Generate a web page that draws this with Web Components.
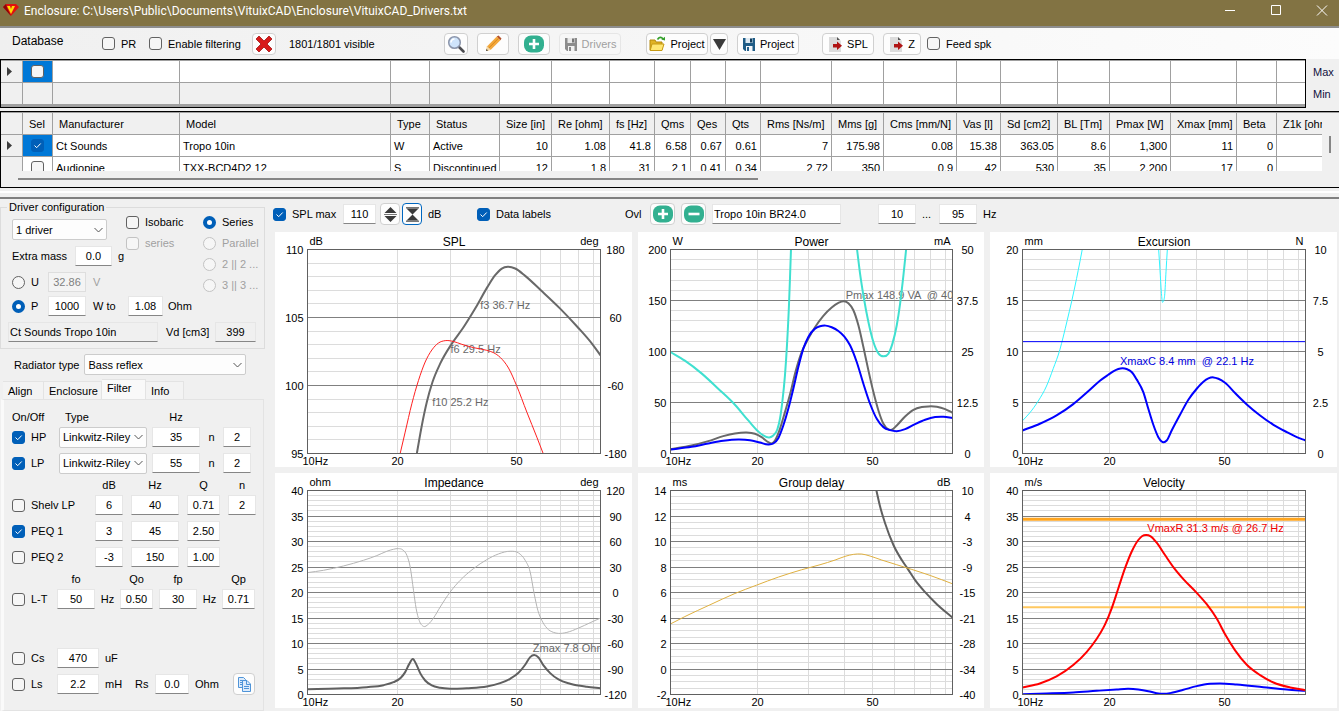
<!DOCTYPE html>
<html lang="en">
<head>
<meta charset="utf-8">
<title>Enclosure</title>
<style>
  html, body {
    margin: 0;
    height: 100%;
  }

  body {
    background: #f0f0f0;
    color: #000;
    font: 11px/14px "Liberation Sans", Arial, sans-serif;
    overflow: hidden;
  }
</style>
</head>
<body>
<enclosure-app></enclosure-app>

<script>
const ICONS = {
  logo: '<svg width="16" height="14" viewBox="0 0 16 14"><path d="M3 1h10l3 3-8 9L0 4z" fill="#e01010"/><path d="M0 4l3-3 1 4 4 8z" fill="#8c0606"/><path d="M4 3l3 0 1 3 1-3 3 0-2 4-2 4-2-4z" fill="#ffd800"/></svg>',
  cross: '<svg width="18" height="18" viewBox="0 0 18 18"><path d="M4 1l5 5 5-5 3 3-5 5 5 5-3 3-5-5-5 5-3-3 5-5-5-5z" fill="#d81b1b" stroke="#a51212" stroke-width=".8"/></svg>',
  search: '<svg width="18" height="18" viewBox="0 0 18 18"><path d="M11.5 11.5l5 5" stroke="#4c4c50" stroke-width="2.6" stroke-linecap="round"/><circle cx="7.5" cy="7.5" r="5.8" fill="#cfe4fb" stroke="#8b95ab" stroke-width="1.5"/><path d="M4 7.500a3.500 3.500 0 0 1 3.500-3.500" fill="none" stroke="#fff" stroke-width="1.600"/></svg>',
  pencil: '<svg width="18" height="18" viewBox="0 0 18 18"><path d="M2 16l1.200-4.800L12.800 1.600l3.600 3.600-9.600 9.600z" fill="#f3a83c"/><path d="M12.800 1.600L14.500.4l3 3-1.100 1.800z" fill="#b5502a"/><path d="M3.200 11.200l3.600 3.600L2 16z" fill="#f2d7a8"/><path d="M2 16l.6-2 1.400 1.400z" fill="#333"/><path d="M4.800 13l9.800-9.800" stroke="#d98717"/></svg>',
  plus: '<svg width="20" height="18" viewBox="0 0 20 18"><rect width="20" height="17" y=".5" rx="7" fill="#32b090"/><path d="M10 4v10M5 9h10" stroke="#fff" stroke-width="2.600"/></svg>',
  minus: '<svg width="20" height="18" viewBox="0 0 20 18"><rect width="20" height="17" y=".5" rx="7" fill="#32b090"/><path d="M4.500 9h11" stroke="#fff" stroke-width="2.600"/></svg>',
  save: '<svg width="14" height="14" viewBox="0 0 14 14"><path d="M1 1h12v13H3l-2-2z" fill="#1f5c86"/><path d="M3.500 1h7v5h-7z" fill="#dfeaf2"/><path d="M8 1.500h2v4H8z" fill="#123c5b"/><path d="M4 9h6.500v5H4z" fill="#f4f7fa"/><path d="M5 10h2v4H5z" fill="#26618b"/></svg>',
  saveOff: '<svg width="14" height="14" viewBox="0 0 14 14"><path d="M1 1h12v13H3l-2-2z" fill="#8c8c8c"/><path d="M3.500 1h7v5h-7z" fill="#e8e8e8"/><path d="M8 1.500h2v4H8z" fill="#777"/><path d="M4 9h6.500v5H4z" fill="#f1f1f1"/><path d="M5 10h2v4H5z" fill="#888"/></svg>',
  open: '<svg width="17" height="16" viewBox="0 0 17 16"><path d="M1 4h5l1 2h6v8H1z" fill="#e0b324" stroke="#b58a0e"/><path d="M3 8h12l-2 6.500H1.200z" fill="#ffe772" stroke="#c79a14"/><path d="M8.500 3.500C10 .8 12.500.8 14 3" fill="none" stroke="#35a02c" stroke-width="1.600"/><path d="M12.300 3.600l3.700.9V.8z" fill="#35a02c"/></svg>',
  down: '<svg width="13" height="12" viewBox="0 0 13 12"><path d="M0 1h13L6.500 12z" fill="#3a3a3a"/></svg>',
  exportDoc: '<svg width="15" height="16" viewBox="0 0 15 16"><path d="M1 1h8l4 4v11H1z" fill="#dcdcdc"/><path d="M9 1l3 3H9z" fill="#555"/><path d="M5 8h4V5.500l5 4.200-5 4.300v-2.500H5z" fill="#b01414"/></svg>',
  spread: '<svg width="13" height="15" viewBox="0 0 13 15"><path d="M6.500 0L12.500 6H.5zM6.500 15L.5 9h12z" fill="#3a3a3a"/><path d="M0 7.500h13" stroke="#777"/></svg>',
  squeeze: '<svg width="13" height="15" viewBox="0 0 13 15"><path d="M.5 1.500h12l-6 6zM.5 13.500h12l-6-6z" fill="#3a3a3a"/><path d="M0 .8h13M0 14.200h13" stroke="#3a3a3a"/></svg>',
  copy: '<svg width="15" height="15" viewBox="0 0 15 15" fill="#dcebfb" stroke="#4f94d8"><path d="M1.500.5h5l2 2v8h-7z"/><path d="M3 3.500h3M3 5.500h2M3 7.500h2"/><path d="M5.500 3.500h4.500l3.500 3.500v7.500h-8z"/><path d="M9.500 3.500v4h4M7 9.500h5M7 11.500h5" fill="none"/></svg>'
};

const CONTROL_CSS = `
  input, select, button {
    box-sizing: border-box;
    margin: 0;
    font: inherit;
    color: inherit;
  }
`;

class TitleBar extends HTMLElement {
  constructor() {
    super();
    this.attachShadow({ mode: 'open' }).innerHTML = `
      <style>
        :host {
          display: flex;
          align-items: center;
          height: 26px;
          padding: 0 11px 0 3px;
          box-sizing: border-box;
          background: #827343;
          color: #fff;
          font: 12px/20px Roboto, sans-serif;
        }
        svg { display: block; }
        h1 { flex: 1; margin: 0 0 4px 5px; font: inherit; white-space: nowrap; overflow: hidden; }
        .logo { margin-bottom: 6px; }
        .buttons { display: flex; gap: 34px; margin-bottom: 6px; }
        button { padding: 0; border: 0; background: none; color: inherit; }
      </style>
      <span class="logo">${ICONS.logo}</span>
      <h1><slot></slot></h1>
      <div class="buttons">
        <button aria-label="Minimize"><svg width="12" height="11"><path d="M1 5.500h10" stroke="#fff"/></svg></button>
        <button aria-label="Maximize"><svg width="12" height="11"><path d="M1.500.5h9v9h-9z" fill="none" stroke="#fff"/></svg></button>
        <button aria-label="Close"><svg width="12" height="11"><path d="M1 .5l10 10M11 .5l-10 10" stroke="#fff"/></svg></button>
      </div>
    `;
  }
}

class ToolButton extends HTMLElement {
  connectedCallback() {
    if (this.shadowRoot) return;
    this.attachShadow({ mode: 'open' }).innerHTML = `
      <style>
        ${CONTROL_CSS}
        :host { display: inline-block; flex: none; }
        button {
          display: flex;
          align-items: center;
          justify-content: center;
          gap: 4px;
          width: 100%;
          height: 22px;
          padding: 0;
          border: 1px solid #d0d0d0;
          border-radius: 4px;
          background: #fdfdfd;
        }
        button:disabled { color: #a0a0a0; background: #f7f7f7; border-color: #e6e6e6; }
        :host([focused]) button { border-color: #0067c0; }
        svg { display: block; flex: none; }
      </style>
      <button ${this.hasAttribute('disabled') ? 'disabled' : ''}
        ${this.hasAttribute('label') ? `aria-label="${this.getAttribute('label')}"` : ''}>
        ${ICONS[this.getAttribute('icon')]}<slot></slot>
      </button>
    `;
  }
}

class TickBox extends HTMLElement {
  connectedCallback() {
    if (this.shadowRoot) return;
    const type = this.getAttribute('type') || 'checkbox';
    const flags = ['checked', 'disabled'].filter((f) => this.hasAttribute(f)).join(' ');
    const name = this.getAttribute('label');
    this.attachShadow({ mode: 'open' }).innerHTML = `
      <style>
        ${CONTROL_CSS}
        :host { display: inline-block; flex: none; }
        label { display: flex; align-items: center; gap: 6px; white-space: nowrap; }
        .mark { display: grid; width: 13px; height: 13px; }
        .mark > * { grid-area: 1 / 1; }
        svg { display: none; pointer-events: none; }
        input {
          appearance: none;
          width: 13px;
          height: 13px;
          border: 1px solid #626262;
          border-radius: 3px;
          background: #f6f6f6;
        }
        input[type=radio] { border-radius: 50%; }
        input:checked { background: #005fb8; border-color: #005fb8; }
        input[type=radio]:checked { background: #fff; border-width: 4px; }
        input[type=checkbox]:checked + svg { display: block; }
        input:disabled { border-color: #c3c3c3; }
        :host([disabled]) label { color: #a0a0a0; }
      </style>
      <label>
        <span class="mark">
          <input type="${type}" ${flags} ${name ? `aria-label="${name}"` : ''}>
          <svg width="13" height="13"><path d="M3.500 6.500l2.200 2.200 4-4.200" fill="none" stroke="#fff"/></svg>
        </span>
        <slot></slot>
      </label>
    `;
  }
}

class ValueBox extends HTMLElement {
  connectedCallback() {
    if (this.shadowRoot) return;
    const flags = ['disabled', 'readonly'].filter((f) => this.hasAttribute(f)).join(' ');
    this.attachShadow({ mode: 'open' }).innerHTML = `
      <style>
        ${CONTROL_CSS}
        :host { display: block; flex: none; min-width: 0; }
        input {
          display: block;
          width: 100%;
          height: 20px;
          padding: 0 1px;
          border: 1px solid #e6e6e6;
          border-bottom-color: #868686;
          background: #fff;
          text-align: center;
        }
        :host([left]) input { text-align: left; }
        input:read-only { background: #f0f0f0; }
        input:disabled { background: #f4f4f4; color: #808080; border-color: #dedede; }
      </style>
      <input type="text" value="${this.getAttribute('value')}" aria-label="${this.getAttribute('label')}" ${flags}>
    `;
  }
}

class PickList extends HTMLElement {
  connectedCallback() {
    if (this.shadowRoot) return;
    this.attachShadow({ mode: 'open' }).innerHTML = `
      <style>
        ${CONTROL_CSS}
        :host { display: grid; align-items: center; }
        select, svg { grid-area: 1 / 1; }
        select {
          appearance: none;
          width: 100%;
          height: 21px;
          padding: 0 14px 0 3px;
          border: 1px solid #cccccc;
          border-radius: 2px;
          background: #fdfdfd;
        }
        svg { justify-self: end; margin-right: 3px; pointer-events: none; }
      </style>
      <select aria-label="${this.getAttribute('label')}"><option>${this.getAttribute('value')}</option></select>
      <svg width="11" height="8"><path d="M1.500 2l4 4 4-4" fill="none" stroke="#555"/></svg>
    `;
  }
}

class DatabaseBar extends HTMLElement {
  constructor() {
    super();
    this.attachShadow({ mode: 'open' }).innerHTML = `
      <style>
        :host {
          display: flex;
          align-items: center;
          gap: 9px;
          height: 33px;
          padding-left: 12px;
          border-top: 2px solid #8e8e8e;
          box-sizing: border-box;
          background: linear-gradient(90deg, #f0f0f0, #fcfcfc);
          white-space: nowrap;
        }
        .title { width: 81px; font-size: 12px; padding-bottom: 6px; }
        .state { width: 146px; margin-left: 4px; }
        .pr { width: 38px; }
        .filtering { width: 94px; }
        .small { width: 24px; }
        .icon { width: 32px; }
        .text { width: 62px; }
        .pair { display: flex; gap: 2px; margin-left: 16px; }
        .arrow { width: 18px; }
        .spl { width: 52px; margin-left: 14px; }
        .z { width: 38px; }
        .feed { margin-left: -3px; }
      </style>
      <span class="title">Database</span>
      <tick-box class="pr">PR</tick-box>
      <tick-box class="filtering">Enable filtering</tick-box>
      <tool-button class="small" icon="cross" label="Clear filter"></tool-button>
      <span class="state">1801/1801 visible</span>
      <tool-button class="small" icon="search" label="Search"></tool-button>
      <tool-button class="icon" icon="pencil" label="Edit"></tool-button>
      <tool-button class="icon" icon="plus" label="Add"></tool-button>
      <tool-button class="text" icon="saveOff" disabled>Drivers</tool-button>
      <div class="pair">
        <tool-button class="text" icon="open">Project</tool-button>
        <tool-button class="arrow" icon="down" label="Recent projects"></tool-button>
      </div>
      <tool-button class="text" icon="save">Project</tool-button>
      <tool-button class="spl" icon="exportDoc">SPL</tool-button>
      <tool-button class="z" icon="exportDoc">Z</tool-button>
      <tick-box class="feed">Feed spk</tick-box>
    `;
  }
}

const COLUMNS = [
  ['', 22], ['Sel', 30], ['Manufacturer', 127], ['Model', 211], ['Type', 39], ['Status', 70],
  ['Size [in]', 52], ['Re [ohm]', 58], ['fs [Hz]', 45], ['Qms', 36], ['Qes', 35], ['Qts', 35],
  ['Rms [Ns/m]', 71], ['Mms [g]', 52], ['Cms [mm/N]', 73], ['Vas [l]', 44], ['Sd [cm2]', 57],
  ['BL [Tm]', 52], ['Pmax [W]', 61], ['Xmax [mm]', 66], ['Beta', 40], ['Z1k [ohm]', 0]
];

const DRIVERS = [
  ['Ct Sounds', 'Tropo 10in', 'W', 'Active', '10', '1.08', '41.8', '6.58', '0.67', '0.61', '7', '175.98', '0.08', '15.38', '363.05', '8.6', '1,300', '11', '0', ''],
  ['Audiopipe', 'TXX-BCD4D2 12', 'S', 'Discontinued', '12', '1.8', '31', '2.1', '0.41', '0.34', '2.72', '350', '0.9', '42', '530', '35', '2,200', '17', '0', '']
];

const GRID_CSS = `
  table {
    width: 100%;
    border-collapse: separate;
    border-spacing: 0;
    table-layout: fixed;
  }
  th, td {
    height: 22px;
    padding: 0 3px;
    box-sizing: border-box;
    border-right: 1px solid #a0a0a0;
    border-bottom: 1px solid #a0a0a0;
    font-weight: normal;
    text-align: left;
    white-space: nowrap;
    overflow: hidden;
    background: #fff;
  }
  th { background: #f0f0f0; }
  thead th { padding-left: 6px; padding-right: 0; }
  tbody th { padding-left: 6px; }
  th svg { display: block; }
  td.sel { padding: 0 8px; }
  td.sel tick-box { display: block; }
  td.current { background: #0078d7; }
  tr > :last-child { border-right: 0; }
`;
const COLGROUP = `<colgroup>${COLUMNS.map(([, w]) => (w ? `<col style="width:${w}px">` : '<col>')).join('')}</colgroup>`;
const ROW_MARK = '<svg width="6" height="9"><path d="M0 0l5 4.500-5 4.500z" fill="#3c3c3c"/></svg>';

class FilterGrid extends HTMLElement {
  constructor() {
    super();
    const blank = COLUMNS.slice(2);
    this.attachShadow({ mode: 'open' }).innerHTML = `
      <style>
        ${GRID_CSS}
        :host { display: flex; }
        .frame { flex: 1; min-width: 0; border: 1px solid #000; background: #a0a0a0; padding: 1px 0 2px; }
        .limits { width: 26px; padding: 2px 0 0 7px; line-height: 22px; color: #101040; }
        .off { background: #f0f0f0; }
      </style>
      <div class="frame">
        <table aria-label="Filter limits">
          ${COLGROUP}
          <tr><th>${ROW_MARK}</th><td class="sel current"><tick-box label="Filter selected"></tick-box></td>${blank.map(() => '<td></td>').join('')}</tr>
          <tr><th></th><td class="off"></td>${blank.map((c, i) => `<td${i < 4 ? ' class="off"' : ''}></td>`).join('')}</tr>
        </table>
      </div>
      <div class="limits">Max<br>Min</div>
    `;
  }
}

class DriverGrid extends HTMLElement {
  constructor() {
    super();
    const rows = DRIVERS.map((cells, i) => `
      <tr>
        <th>${i ? '' : ROW_MARK}</th>
        <td class="sel${i ? '' : ' current'}"><tick-box ${i ? '' : 'checked'} label="Select ${cells[0]}"></tick-box></td>
        ${cells.map((c, n) => `<td${n > 3 ? ' class="num"' : ''}>${c}</td>`).join('')}
      </tr>`).join('');
    this.attachShadow({ mode: 'open' }).innerHTML = `
      <style>
        ${GRID_CSS}
        :host { display: block; border: 1px solid #000; border-right: 0; margin-top: 3px; }
        .view { display: grid; grid-template-columns: 1fr 17px; border-top: 1px solid #a0a0a0; }
        .rows { height: 58px; overflow: hidden; }
        .num { text-align: right; }
        .vbar { padding: 23px 0 0 7px; }
        .vbar::before { content: ""; display: block; width: 2px; height: 17px; background: #868686; }
        .hbar { height: 16px; padding: 7px 0 0 17px; box-sizing: border-box; }
        .hbar::before { content: ""; display: block; width: 56%; height: 2px; background: #868686; }
      </style>
      <div class="view">
        <div class="rows">
          <table>
            ${COLGROUP}
            <thead><tr>${COLUMNS.map(([name]) => `<th>${name}</th>`).join('')}</tr></thead>
            <tbody>${rows}</tbody>
          </table>
        </div>
        <div class="vbar"></div>
      </div>
      <div class="hbar"></div>
    `;
  }
}

class DriverConfig extends HTMLElement {
  constructor() {
    super();
    this.attachShadow({ mode: 'open' }).innerHTML = `
      <style>
        :host { display: block; }
        fieldset {
          margin: 0 4px 0 0;
          padding: 0 8px 4px 11px;
          border: 1px solid #dcdcdc;
          min-width: 0;
        }
        legend { margin-left: -5px; padding: 0 2px; }
        .top, .upper, .row { display: flex; align-items: center; }
        .top, .upper { align-items: flex-start; }
        .main { width: 191px; flex: none; }
        .combo { width: 114px; padding-top: 5px; }
        .combo pick-list { width: 95px; }
        .checks { display: grid; gap: 7px; padding-top: 1px; }
        .radios { display: grid; gap: 7px; padding-top: 1px; }
        .row { height: 24px; }
        .mass { margin: 4px 0 2px; }
        .mass value-box { width: 37px; margin: 0 6px 0 auto; }
        .mass span:last-child { width: 8px; }
        tick-box.mode { width: 36px; }
        .level { width: 38px; }
        .unit { width: 42px; padding-left: 7px; box-sizing: border-box; }
        .re { width: 35px; margin-right: 5px; }
        .off { color: #a0a0a0; }
        .name { margin: 2px 0 0 -4px; }
        .name value-box { width: 150px; }
        .name span { flex: 1; padding-left: 8px; }
        .name .vd { width: 41px; }
      </style>
      <fieldset>
        <legend>Driver configuration</legend>
        <div class="top">
          <div class="main">
            <div class="upper">
              <div class="combo">
                <pick-list label="Driver count" value="1 driver"></pick-list>
                <div class="row mass"><span>Extra mass</span><value-box label="Extra mass" value="0.0"></value-box><span>g</span></div>
              </div>
              <div class="checks">
                <tick-box>Isobaric</tick-box>
                <tick-box disabled>series</tick-box>
              </div>
            </div>
            <div class="row"><tick-box type="radio" class="mode">U</tick-box><value-box class="level" label="Voltage" value="32.86" disabled></value-box><span class="unit off">V</span></div>
            <div class="row"><tick-box type="radio" class="mode" checked>P</tick-box><value-box class="level" label="Power" value="1000"></value-box><span class="unit">W to</span><value-box class="re" label="Load" value="1.08"></value-box><span>Ohm</span></div>
          </div>
          <div class="radios">
            <tick-box type="radio" checked>Series</tick-box>
            <tick-box type="radio" disabled>Parallel</tick-box>
            <tick-box type="radio" disabled>2 || 2 ...</tick-box>
            <tick-box type="radio" disabled>3 || 3 ...</tick-box>
          </div>
        </div>
        <div class="row name"><value-box left readonly label="Driver" value="Ct Sounds Tropo 10in"></value-box><span>Vd [cm3]</span><value-box class="vd" readonly label="Vd" value="399"></value-box></div>
      </fieldset>
    `;
  }
}

class FilterPanel extends HTMLElement {
  constructor() {
    super();
    const box = (label, value) => `<value-box label="${label}" value="${value}"></value-box>`;
    this.attachShadow({ mode: 'open' }).innerHTML = `
      <style>
        :host { display: flex; flex-direction: column; flex: 1; }
        .radiator { display: flex; align-items: center; gap: 5px; height: 31px; padding: 0 23px 0 14px; }
        .radiator pick-list { flex: 1; }
        .tabs { display: flex; align-items: flex-end; margin: -1px 0 -1px 3px; height: 21px; }
        .tabs button {
          height: 19px;
          padding: 0 5px;
          border: 1px solid #e3e3e3;
          border-left: 0;
          background: #f3f3f3;
          font: inherit;
          text-align: left;
          color: inherit;
        }
        .tabs .on { height: 21px; padding: 0 5px 4px; background: #f9f9f9; border-bottom-color: #f9f9f9; }
        .page { flex: 1; margin: 0 5px 0 1px; padding: 8px 0 0 8px; border: 1px solid #e3e3e3; border-left: 3px solid #fafafa; }
        .line { display: grid; align-items: center; height: 26px; }
        .head { height: 14px; margin-top: 2px; }
        .line > span { text-align: center; }
        .line > .lead { text-align: left; }
        .line > .after { text-align: left; padding-left: 6px; }
        .pass { grid-template-columns: 47px 93px 48px 23px 28px; }
        .pass pick-list { width: 88px; }
        .eq { grid-template-columns: 75px 28px 48px 33px 28px; column-gap: 8px; }
        .lt { grid-template-columns: 45px 38px 25px 33px 44px 25px 33px; }
        .lt > .wide { padding-left: 6px; }
        .part { grid-template-columns: 45px 42px 36px 20px 34px 44px 22px; }
        .gap { height: 33px; }
      </style>
      <div class="radiator"><span>Radiator type</span><pick-list label="Radiator type" value="Bass reflex"></pick-list></div>
      <div class="tabs" role="tablist">
        <button role="tab" style="width:41px">Align</button>
        <button role="tab" style="width:58px">Enclosure</button>
        <button role="tab" style="width:44px" class="on" aria-selected="true">Filter</button>
        <button role="tab" style="width:38px">Info</button>
      </div>
      <div class="page">
        <div class="line head pass"><span class="lead">On/Off</span><span class="after">Type</span><span>Hz</span></div>
        <div class="line pass"><tick-box checked>HP</tick-box><pick-list label="HP type" value="Linkwitz-Riley"></pick-list>${box('HP Hz', 35)}<span>n</span>${box('HP order', 2)}</div>
        <div class="line pass"><tick-box checked>LP</tick-box><pick-list label="LP type" value="Linkwitz-Riley"></pick-list>${box('LP Hz', 55)}<span>n</span>${box('LP order', 2)}</div>
        <div class="line head eq"><span></span><span>dB</span><span>Hz</span><span>Q</span><span>n</span></div>
        <div class="line eq"><tick-box>Shelv LP</tick-box>${box('Shelf dB', 6)}${box('Shelf Hz', 40)}${box('Shelf Q', '0.71')}${box('Shelf order', 2)}</div>
        <div class="line eq"><tick-box checked>PEQ 1</tick-box>${box('PEQ 1 dB', 3)}${box('PEQ 1 Hz', 45)}${box('PEQ 1 Q', '2.50')}</div>
        <div class="line eq"><tick-box>PEQ 2</tick-box>${box('PEQ 2 dB', -3)}${box('PEQ 2 Hz', 150)}${box('PEQ 2 Q', '1.00')}</div>
        <div class="line head lt"><span></span><span>fo</span><span></span><span>Qo</span><span class="wide">fp</span><span></span><span>Qp</span></div>
        <div class="line lt"><tick-box>L-T</tick-box>${box('fo', 50)}<span>Hz</span>${box('Qo', '0.50')}<value-box class="wide" label="fp" value="30"></value-box><span>Hz</span>${box('Qp', '0.71')}</div>
        <div class="gap"></div>
        <div class="line part"><tick-box>Cs</tick-box>${box('Cs', 470)}<span class="after">uF</span></div>
        <div class="line part"><tick-box>Ls</tick-box>${box('Ls', '2.2')}<span class="after">mH</span><span class="lead">Rs</span>${box('Rs', '0.0')}<span class="after">Ohm</span><tool-button icon="copy" label="Copy"></tool-button></div>
      </div>
    `;
  }
}

class ChartBar extends HTMLElement {
  constructor() {
    super();
    this.attachShadow({ mode: 'open' }).innerHTML = `
      <style>
        :host { display: flex; align-items: center; gap: 6px; height: 30px; padding-bottom: 3px; white-space: nowrap; }
        .max { width: 64px; }
        .level { width: 33px; }
        .spin { display: flex; gap: 2px; margin-left: -2px; }
        .spin tool-button { width: 20px; }
        .db { width: 43px; }
        .labels { width: 142px; }
        .ovl { width: 19px; }
        .add { width: 25px; }
        .title { width: 129px; }
        .range { width: 38px; }
        .from { margin-left: 31px; }
        .dots { width: 11px; }
      </style>
      <tick-box class="max" checked>SPL max</tick-box>
      <value-box class="level" label="SPL max" value="110"></value-box>
      <div class="spin">
        <tool-button icon="spread" label="Expand scale"></tool-button>
        <tool-button icon="squeeze" label="Fit scale" focused></tool-button>
      </div>
      <span class="db">dB</span>
      <tick-box class="labels" checked>Data labels</tick-box>
      <span class="ovl">Ovl</span>
      <tool-button class="add" icon="plus" label="Add overlay"></tool-button>
      <tool-button class="add" icon="minus" label="Remove overlay"></tool-button>
      <value-box class="title" left label="Overlay name" value="Tropo 10in BR24.0"></value-box>
      <value-box class="range from" label="From Hz" value="10"></value-box>
      <span class="dots">...</span>
      <value-box class="range" label="To Hz" value="95"></value-box>
      <span>Hz</span>
    `;
  }
}

// Traces are x,y pairs inside the frame [left, top, right, bottom].
const CHARTS = {
  spl: {
    title: 'SPL', units: ['dB', 'deg'], steps: 15, every: 5, frame: [112, 163, 991, 774],
    left: [110, 105, 100, 95], right: [180, 60, -60, -180],
    notes: [[630, 342, 'f3 36.7 Hz', '#696969'], [541, 474, 'f6 29.5 Hz', '#696969'], [486, 633, 'f10 25.2 Hz', '#696969']],
    traces: [
      ['#696969', 2, '440,774 455,690 470,620 487,560 510,505 545,445 580,396 615,340 652,275 675,240 695,220 713,215 735,220 765,242 812,285 870,340 922,395 967,447 991,480'],
      ['#ff2020', 1, '390,774 405,710 425,625 445,555 465,500 485,464 505,443 525,436 548,438 575,447 610,457 650,465 670,472 690,486 715,518 739,570 770,650 800,725 819,774']
    ]
  },
  power: {
    title: 'Power', units: ['W', 'mA'], steps: 20, every: 5, frame: [107, 163, 952, 774],
    left: [200, 150, 100, 50, 0], right: [50, 37.5, 25, 12.5, 0],
    notes: [[632, 311, 'Pmax 148.9 VA  @ 40', '#696969']],
    traces: [
      ['#40e0d0', 2, '107,470 150,496 200,534 250,580 300,628 340,675 370,708 385,720 403,726 415,720 427,702 435,670 442,620 450,540 456,450 462,330 465,250 468,163'],
      ['#40e0d0', 2, '666,163 675,235 685,300 700,380 715,440 730,474 746,483 760,475 772,445 785,390 795,325 805,240 813,163'],
      ['#696969', 2, '107,761 170,750 220,737 265,722 300,714 335,711 360,715 380,725 400,740 410,744 420,735 435,700 450,650 467,590 480,535 500,470 520,430 540,396 565,362 590,337 610,323 627,318 640,324 655,345 670,390 685,455 700,525 715,590 730,645 745,685 760,702 770,703 785,690 810,663 835,643 860,635 880,633 905,634 930,641 952,652'],
      ['#0000ff', 2, '107,762 170,754 220,744 265,736 310,732 345,734 375,741 400,747 415,744 430,728 445,690 460,640 475,580 490,515 505,460 520,425 540,400 555,393 572,391 590,396 610,407 628,424 645,450 665,500 685,565 705,625 725,670 745,695 765,704 785,707 810,701 840,686 870,673 900,665 925,664 952,668']
    ]
  },
  excursion: {
    title: 'Excursion', units: ['mm', 'N'], steps: 20, every: 5, frame: [128, 163, 976, 774],
    left: [20, 15, 10, 5, 0], right: [10, 7.5, 5, 2.5, 0],
    notes: [[420, 510, 'XmaxC 8.4 mm  @ 22.1 Hz', '#0000e0']],
    traces: [
      ['#30f4ff', 1, '128,676 150,652 175,617 200,572 220,520 240,463 250,425 262,375 275,320 290,250 300,200 307,163'],
      ['#30f4ff', 1, '536,163 540,225 544,290 547,320 549,320 552,313 554,300 558,230 562,163'],
      ['#0000ff', 1, '128,439 976,439'],
      ['#0000ff', 2, '128,705 180,685 230,660 280,626 330,583 360,556 385,538 400,528 415,521 428,519 440,521 455,530 470,552 490,590 505,640 520,688 535,725 545,738 551,740 560,735 575,705 600,658 625,613 650,580 670,559 685,549 700,546 715,550 735,562 765,593 800,627 840,660 880,688 920,710 950,725 976,735']
    ]
  },
  impedance: {
    title: 'Impedance', units: ['ohm', 'deg'], steps: 40, every: 5, frame: [112, 61, 991, 672],
    left: [40, 35, 30, 25, 20, 15, 10, 5, 0], right: [120, 90, 60, 30, 0, -30, -60, -90, -120],
    notes: [[788, 545, 'Zmax 7.8 Ohm', '#696969']],
    traces: [
      ['#b4b4b4', 1, '112,307 160,300 220,287 280,270 320,256 350,243 370,237 385,235 398,239 410,255 420,290 430,360 438,415 447,450 460,468 475,461 490,443 510,410 540,365 570,330 610,295 650,268 685,251 720,243 745,248 765,270 780,305 792,370 803,420 815,450 830,473 850,486 865,489 890,486 925,473 960,457 991,443'],
      ['#606060', 2, '112,656 200,654 290,650 340,644 370,635 392,622 405,605 417,581 428,566 438,581 450,608 465,630 485,645 510,652 540,655 590,653 650,648 690,638 720,625 745,607 765,583 780,560 792,554 805,561 820,585 840,608 865,627 900,640 950,649 991,653']
    ]
  },
  delay: {
    title: 'Group delay', units: ['ms', 'dB'], steps: 32, every: 4, frame: [107, 62, 952, 672],
    left: [14, 12, 10, 8, 6, 4, 2, 0, -2], right: [10, 4, -3, -9, -15, -21, -28, -34, -40],
    notes: [],
    traces: [
      ['#606060', 2, '724,62 735,110 750,160 775,225 800,270 817,295 840,330 870,366 905,402 952,442'],
      ['#dfb040', 1, '107,461 150,439 225,404 300,370 365,345 430,321 500,299 555,284 600,270 630,259 655,253 680,252 705,258 740,270 785,284 830,298 885,316 952,341']
    ]
  },
  velocity: {
    title: 'Velocity', units: ['m/s', ''], steps: 40, every: 5, frame: [128, 62, 976, 672],
    left: [40, 35, 30, 25, 20, 15, 10, 5, 0], right: [],
    notes: [[502, 186, 'VmaxR 31.3 m/s @ 26.7 Hz', '#f00000']],
    traces: [
      ['#ffa51e', 3, '128,148 976,148'],
      ['#ffc860', 2, '128,411 976,411'],
      ['#0000ff', 2, '128,671 200,669 280,666 350,661 410,657 445,655 475,657 505,662 530,668 550,670 575,667 610,658 650,647 690,640 720,639 770,642 850,650 920,657 976,661'],
      ['#ff0000', 2, '128,651 180,639 230,618 280,584 320,545 350,506 375,463 395,415 415,355 435,295 455,245 475,210 487,198 498,195 512,199 530,218 555,255 580,291 610,327 650,368 680,402 710,445 735,492 765,540 800,583 840,614 880,636 930,651 976,659']
    ]
  }
};

function slopeAt(a, b, c) {
  if (!a || !c) {
    const [p, q] = a ? [a, b] : [b, c];
    return (q[1] - p[1]) / (q[0] - p[0]);
  }
  const h0 = b[0] - a[0];
  const h1 = c[0] - b[0];
  const d0 = (b[1] - a[1]) / h0;
  const d1 = (c[1] - b[1]) / h1;
  return (h1 * d0 + h0 * d1) / (h0 + h1);
}

function smoothPath(points) {
  const slopes = points.map((p, i) => slopeAt(points[i - 1], p, points[i + 1]));
  let d = `M${points[0]}`;
  for (let i = 0; i < points.length - 1; i++) {
    const [x1, y1] = points[i];
    const [x2, y2] = points[i + 1];
    const t = (x2 - x1) / 3;
    d += `C${x1 + t},${y1 + t * slopes[i]} ${x2 - t},${y2 - t * slopes[i + 1]} ${x2},${y2}`;
  }
  return d;
}

class ResponseChart extends HTMLElement {
  constructor() {
    super();
    this.attachShadow({ mode: 'open' }).innerHTML = `
      <style>
        :host { display: block; min-width: 0; min-height: 0; background: #fff; overflow: hidden; }
        svg { display: block; }
        text { white-space: pre; }
        .title { font-size: 12px; }
      </style>
      <svg id="chart" role="img"></svg>
    `;
    this.svg = this.shadowRoot.getElementById('chart');
  }

  connectedCallback() {
    this.draw();
    new ResizeObserver(() => this.draw()).observe(this);
  }

  draw() {
    const c = CHARTS[this.getAttribute('name')];
    const width = this.clientWidth;
    const height = this.clientHeight;
    if (!width || !height) return;
    const x0 = 32.5;
    const y0 = 17.5;
    const w = width - 64;
    const h = height - 31;
    const logX = (f) => Math.round(w * Math.log(f / 10) / Math.log(9.5));
    const rowY = (i, n) => Math.round(h * i / n);
    const [fx0, fy0, fx1, fy1] = c.frame;
    const place = (x, y) => [(x - fx0) / (fx1 - fx0) * w, (y - fy0) / (fy1 - fy0) * h];

    let minor = '';
    let major = '';
    for (let f = 20; f <= 90; f += 10) minor += `M${logX(f)} 0V${h}`;
    for (let i = 0; i <= c.steps; i++) {
      const line = `M0 ${rowY(i, c.steps)}H${w}`;
      if (i % c.every) minor += line; else major += line;
    }

    const traces = c.traces.map(([color, size, list]) => {
      const points = list.split(' ').map((p) => place(...p.split(',').map(Number)));
      return `<path d="${smoothPath(points)}" stroke="${color}" stroke-width="${size}" fill="none"/>`;
    }).join('');
    const notes = c.notes.map(([x, y, text, color]) => {
      const [nx, ny] = place(x, y);
      return `<text x="${nx}" y="${ny}" fill="${color}">${text}</text>`;
    }).join('');
    const scale = (list, x, anchor) => list.map((v, i) =>
      `<text x="${x}" y="${y0 + rowY(i, list.length - 1) + 4}" text-anchor="${anchor}">${v}</text>`).join('');

    this.svg.setAttribute('width', width);
    this.svg.setAttribute('height', height);
    this.svg.setAttribute('aria-label', c.title);
    this.svg.innerHTML = `
      <g transform="translate(${x0} ${y0})" fill="none">
        <path d="${minor}" stroke="#dcdcdc"/>
        <path d="${major}" stroke="#808080"/>
      </g>
      <svg x="${x0}" y="${y0}" width="${w}" height="${h}" overflow="hidden">${notes}${traces}</svg>
      <rect x="${x0}" y="${y0}" width="${w}" height="${h}" fill="none" stroke="#606060"/>
      <text class="title" x="${x0 + w / 2}" y="14" text-anchor="middle">${c.title}</text>
      <text x="${x0 + 2}" y="13">${c.units[0]}</text>
      <text x="${x0 + w - 2}" y="13" text-anchor="end">${c.units[1]}</text>
      ${scale(c.left, x0 - 4, 'end')}
      ${scale(c.right, x0 + w + 15, 'middle')}
      <text x="${x0 - 5}" y="${y0 + h + 11}">10Hz</text>
      <text x="${x0 + logX(20)}" y="${y0 + h + 11}" text-anchor="middle">20</text>
      <text x="${x0 + logX(50)}" y="${y0 + h + 11}" text-anchor="middle">50</text>
    `;
  }
}

class EnclosureApp extends HTMLElement {
  constructor() {
    super();
    this.attachShadow({ mode: 'open' }).innerHTML = `
      <style>
        :host { display: flex; flex-direction: column; height: 100vh; }
        .splitter { height: 9px; border-bottom: 2px solid #808080; background: linear-gradient(#f0f0f0 3px, #fff 3px, #fff 5px, #f0f0f0 5px); }
        main { flex: 1; display: grid; grid-template-columns: 269px minmax(0, 1fr); min-height: 0; }
        .side { display: flex; flex-direction: column; min-height: 0; overflow: hidden; }
        .side driver-config { margin-top: 1px; }
        .work { display: flex; flex-direction: column; min-height: 0; padding: 0 2px 3px 4px; }
        .charts { flex: 1; display: grid; grid-template-columns: 357fr 346fr 347fr; grid-template-rows: 1fr 1fr; gap: 6px; min-height: 0; margin-left: 2px; }
      </style>
      <title-bar>Enclosure: C:\\Users\\Public\\Documents\\VituixCAD\\Enclosure\\VituixCAD_Drivers.txt</title-bar>
      <database-bar></database-bar>
      <filter-grid></filter-grid>
      <driver-grid></driver-grid>
      <div class="splitter"></div>
      <main>
        <div class="side">
          <driver-config></driver-config>
          <filter-panel></filter-panel>
        </div>
        <div class="work">
          <chart-bar></chart-bar>
          <div class="charts">
            ${Object.keys(CHARTS).map((name) => `<response-chart name="${name}"></response-chart>`).join('')}
          </div>
        </div>
      </main>
    `;
  }
}

customElements.define('title-bar', TitleBar);
customElements.define('tool-button', ToolButton);
customElements.define('tick-box', TickBox);
customElements.define('value-box', ValueBox);
customElements.define('pick-list', PickList);
customElements.define('database-bar', DatabaseBar);
customElements.define('filter-grid', FilterGrid);
customElements.define('driver-grid', DriverGrid);
customElements.define('driver-config', DriverConfig);
customElements.define('filter-panel', FilterPanel);
customElements.define('chart-bar', ChartBar);
customElements.define('response-chart', ResponseChart);
customElements.define('enclosure-app', EnclosureApp);
</script>
</body>
</html>
